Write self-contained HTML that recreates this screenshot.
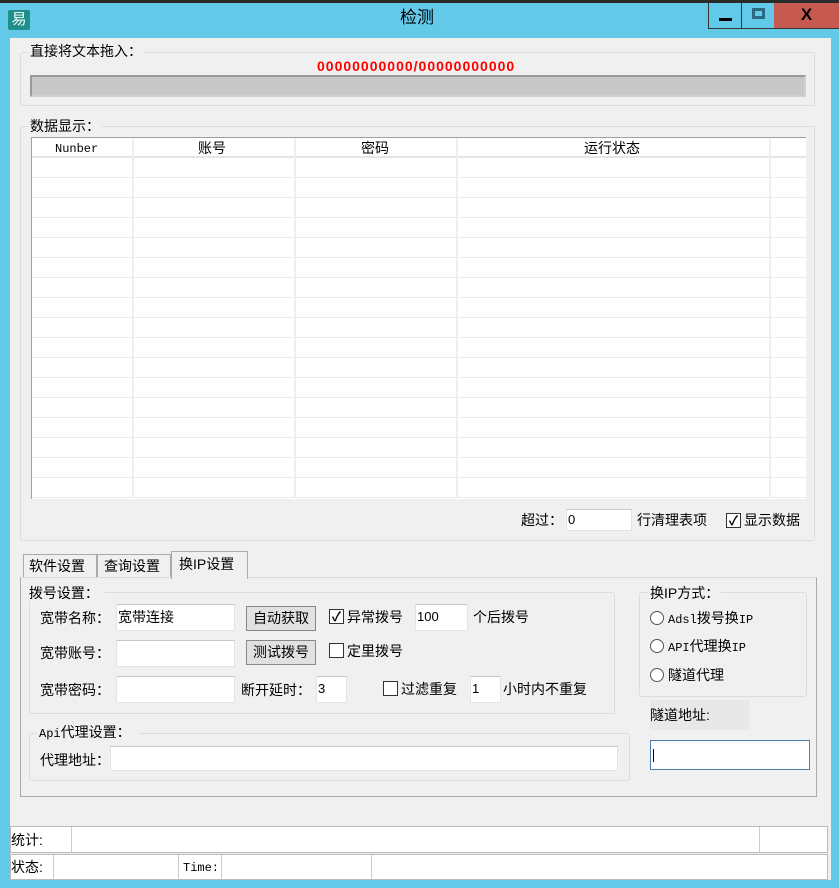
<!DOCTYPE html>
<html><head><meta charset="utf-8"><style>
*{margin:0;padding:0;box-sizing:border-box}
body{width:839px;height:888px;background:#62c9e9;position:relative;overflow:hidden;font-family:"Liberation Sans","Noto Sans CJK SC",sans-serif;font-size:14px;color:#000}
.a{position:absolute}
.client{position:absolute;left:10px;top:38px;width:821px;height:842px;background:#f0f0f0}
.grp{position:absolute;border:1px solid #d9dde2;border-radius:3px}
.lbl{position:absolute;background:#f0f0f0;padding:0 2px;white-space:nowrap;line-height:16px}
.inp{position:absolute;background:#fff;border:1px solid #e3e3e3;border-top-color:#c8c8c8;font-size:13px;line-height:24px;padding-left:1px}
.btn{position:absolute;background:#e1e1e1;border:1px solid #888;text-align:center;line-height:22px}
.cb{position:absolute;width:15px;height:15px;border:1px solid #333;background:#fff;font-size:13px;line-height:13px;text-align:center;font-weight:bold}
.rd{position:absolute;width:14px;height:14px;border:1px solid #555;border-radius:50%;background:#fff}
.t{position:absolute;white-space:nowrap;line-height:18px}
.mono{font-family:"Liberation Mono","Noto Sans CJK SC",monospace;font-size:12px}
</style></head><body>
<div class="a" style="left:0;top:0;width:839px;height:3px;background:#2b2b2b"></div>
<div class="a" style="left:8px;top:10px;width:22px;height:20px;background:#1f8f8a;border-radius:2px;color:#fff;font-size:15px;line-height:20px;text-align:center">易</div>
<div class="t" style="left:400px;top:9px;font-size:17px">检测</div>
<div class="a" style="left:708px;top:3px;width:34px;height:26px;border:1px solid #333;border-top:none"><div class="a" style="left:10px;top:15px;width:13px;height:3px;background:#000"></div></div>
<div class="a" style="left:741px;top:3px;width:34px;height:26px;border:1px solid #333;border-top:none"><div class="a" style="left:10px;top:5px;width:13px;height:11px;border:3px solid #2c6a84"></div></div>
<div class="a" style="left:774px;top:3px;width:65px;height:26px;background:#c75a50;border-bottom:1px solid #333;text-align:center;font-weight:bold;font-size:17px;line-height:24px">X</div>

<div class="client"></div>
<div class="grp" style="left:20px;top:52px;width:795px;height:54px"></div>
<div class="lbl" style="left:28px;top:43px">直接将文本拖入：</div>
<div class="t" style="left:317px;top:57px;color:#f00;font-weight:bold;font-size:14px;letter-spacing:1px;font-family:'Liberation Sans',sans-serif">00000000000/00000000000</div>
<div class="a" style="left:30px;top:75px;width:776px;height:22px;background:#c8c8c8;border:2px solid #9a9a9a;border-right-color:#d0d0d0;border-bottom-color:#d0d0d0"></div>

<div class="grp" style="left:20px;top:126px;width:795px;height:415px"></div>
<div class="lbl" style="left:28px;top:118px">数据显示：</div>
<div class="a" style="left:31px;top:137px;width:775px;height:362px;background:#fff;border:1px solid #a0a0a0;border-right:none;border-bottom:none;
background-image:linear-gradient(#ececec 1px,transparent 1px);background-size:100% 20px;background-position:0 19px"></div>
<div class="a" style="left:32px;top:138px;width:774px;height:20px;background:#fff;border-bottom:2px solid #e5e5e5"></div>
<div class="a" style="left:132px;top:138px;width:2px;height:360px;background:#eee"></div>
<div class="a" style="left:294px;top:138px;width:2px;height:360px;background:#eee"></div>
<div class="a" style="left:456px;top:138px;width:2px;height:360px;background:#eee"></div>
<div class="a" style="left:769px;top:138px;width:2px;height:360px;background:#eee"></div>
<div class="t mono" style="left:55px;top:140px">Nunber</div>
<div class="t" style="left:198px;top:139px">账号</div>
<div class="t" style="left:361px;top:139px">密码</div>
<div class="t" style="left:584px;top:139px">运行状态</div>

<div class="t" style="left:521px;top:511px">超过：</div>
<div class="inp" style="left:566px;top:509px;width:66px;height:22px;line-height:20px">0</div>
<div class="t" style="left:637px;top:511px">行清理表项</div>
<div class="cb" style="left:726px;top:513px">✓</div>
<div class="t" style="left:744px;top:511px">显示数据</div>

<div class="a" style="left:20px;top:577px;width:797px;height:220px;border:1px solid #aaa;border-top-color:#d8d8d8"></div>
<div class="a" style="left:23px;top:554px;width:74px;height:23px;border:1px solid #aaa;border-bottom:none;background:#f0f0f0"><div class="t" style="left:5px;top:2px">软件设置</div></div>
<div class="a" style="left:97px;top:554px;width:74px;height:23px;border:1px solid #aaa;border-bottom:none;background:#f0f0f0"><div class="t" style="left:6px;top:2px">查询设置</div></div>
<div class="a" style="left:171px;top:551px;width:77px;height:28px;border:1px solid #aaa;border-bottom:none;background:#f0f0f0"><div class="t" style="left:7px;top:3px">换IP设置</div></div>

<div class="grp" style="left:29px;top:592px;width:586px;height:122px"></div>
<div class="lbl" style="left:23px;top:585px;padding:0 6px 0 2px">&nbsp;拨号设置：</div>
<div class="t" style="left:40px;top:609px">宽带名称：</div>
<div class="inp" style="left:116px;top:604px;width:119px;height:27px;font-size:14px">宽带连接</div>
<div class="btn" style="left:246px;top:606px;width:70px;height:25px">自动获取</div>
<div class="cb" style="left:329px;top:609px">✓</div>
<div class="t" style="left:347px;top:608px">异常拨号</div>
<div class="inp" style="left:415px;top:604px;width:53px;height:27px">100</div>
<div class="t" style="left:473px;top:608px">个后拨号</div>
<div class="t" style="left:40px;top:644px">宽带账号：</div>
<div class="inp" style="left:116px;top:640px;width:119px;height:27px"></div>
<div class="btn" style="left:246px;top:640px;width:70px;height:25px">测试拨号</div>
<div class="cb" style="left:329px;top:643px"></div>
<div class="t" style="left:347px;top:642px">定里拨号</div>
<div class="t" style="left:40px;top:681px">宽带密码：</div>
<div class="inp" style="left:116px;top:676px;width:119px;height:27px"></div>
<div class="t" style="left:241px;top:681px">断开延时：</div>
<div class="inp" style="left:316px;top:676px;width:31px;height:27px">3</div>
<div class="cb" style="left:383px;top:681px"></div>
<div class="t" style="left:401px;top:680px">过滤重复</div>
<div class="inp" style="left:470px;top:676px;width:31px;height:27px">1</div>
<div class="t" style="left:503px;top:680px">小时内不重复</div>

<div class="grp" style="left:29px;top:733px;width:601px;height:48px"></div>
<div class="lbl" style="left:37px;top:724px;padding-right:8px"><span class="mono">Api</span>代理设置：</div>
<div class="t" style="left:40px;top:751px">代理地址：</div>
<div class="inp" style="left:110px;top:746px;width:508px;height:25px"></div>

<div class="grp" style="left:639px;top:592px;width:168px;height:105px"></div>
<div class="lbl" style="left:648px;top:585px">换IP方式：</div>
<div class="rd" style="left:650px;top:611px"></div><div class="t" style="left:668px;top:609px"><span class="mono">Adsl</span>拨号换<span class="mono">IP</span></div>
<div class="rd" style="left:650px;top:639px"></div><div class="t" style="left:668px;top:637px"><span class="mono">API</span>代理换<span class="mono">IP</span></div>
<div class="rd" style="left:650px;top:668px"></div><div class="t" style="left:668px;top:666px">隧道代理</div>
<div class="a" style="left:650px;top:700px;width:100px;height:30px;background:#e8e8e8"></div>
<div class="t" style="left:650px;top:706px">隧道地址:</div>
<div class="a" style="left:650px;top:740px;width:160px;height:30px;background:#fff;border:1px solid #4d7fb0"><div class="a" style="left:2px;top:8px;width:1px;height:13px;background:#000"></div></div>

<div class="a" style="left:10px;top:826px;width:818px;height:27px;background:#fff;border:1px solid #bbb"></div>
<div class="a" style="left:71px;top:827px;width:1px;height:25px;background:#ccc"></div>
<div class="a" style="left:759px;top:827px;width:1px;height:25px;background:#ccc"></div>
<div class="t" style="left:11px;top:831px">统计:</div>
<div class="a" style="left:10px;top:854px;width:818px;height:26px;background:#fff;border:1px solid #bbb"></div>
<div class="a" style="left:53px;top:855px;width:1px;height:24px;background:#ccc"></div>
<div class="a" style="left:178px;top:855px;width:1px;height:24px;background:#ccc"></div>
<div class="a" style="left:221px;top:855px;width:1px;height:24px;background:#ccc"></div>
<div class="a" style="left:371px;top:855px;width:1px;height:24px;background:#ccc"></div>
<div class="t" style="left:11px;top:858px">状态:</div>
<div class="t mono" style="left:183px;top:859px">Time:</div>
</body></html>
